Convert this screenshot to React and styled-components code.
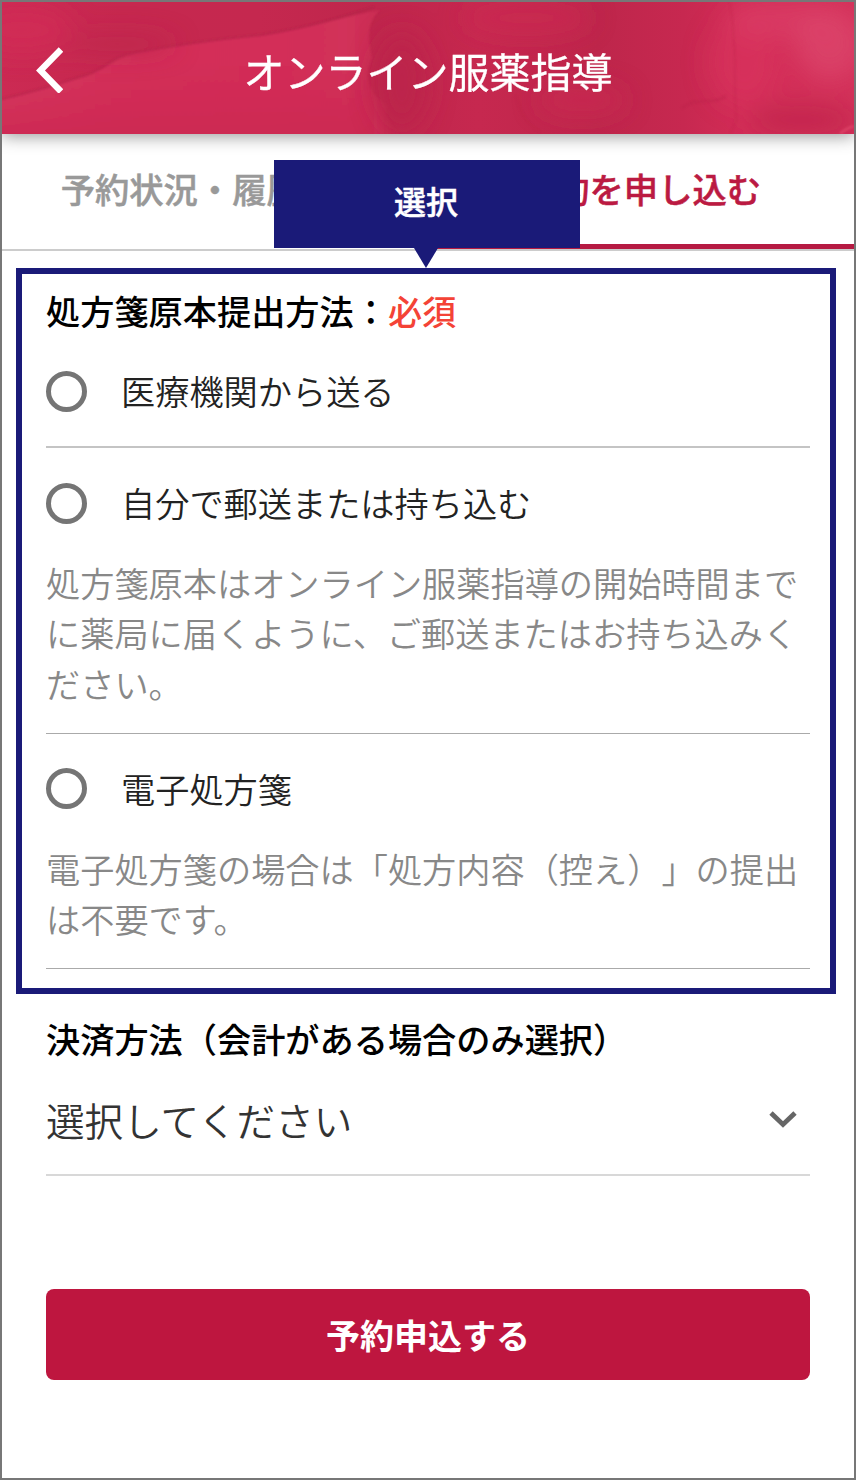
import React, { useState } from "react";

// Styling
import styled, { createGlobalStyle } from "styled-components";

const options = [
  { id: "clinic", label: "医療機関から送る" },
  {
    id: "self",
    label: "自分で郵送または持ち込む",
    note: "処方箋原本はオンライン服薬指導の開始時間までに薬局に届くように、ご郵送またはお持ち込みください。",
  },
  {
    id: "digital",
    label: "電子処方箋",
    note: "電子処方箋の場合は「処方内容（控え）」の提出は不要です。",
  },
];

// Watercolor texture behind the title
const HeaderArt = () => (
  <Art viewBox="0 0 852 132" preserveAspectRatio="none" aria-hidden="true">
    <defs>
      <linearGradient id="base" x1="0" x2="1" y1="0" y2="0">
        <stop offset="0" stopColor="#cc2a53" />
        <stop offset="0.14" stopColor="#c6284f" />
        <stop offset="0.3" stopColor="#c5284f" />
        <stop offset="0.44" stopColor="#bf264c" />
        <stop offset="0.56" stopColor="#c6284f" />
        <stop offset="0.7" stopColor="#be264b" />
        <stop offset="0.8" stopColor="#c72850" />
        <stop offset="0.87" stopColor="#d32d57" />
        <stop offset="1" stopColor="#d33059" />
      </linearGradient>
      <linearGradient id="petal" x1="0" x2="1" y1="0" y2="0">
        <stop offset="0" stopColor="#d83963" />
        <stop offset="0.3" stopColor="#d4305a" />
        <stop offset="0.7" stopColor="#d32d58" />
        <stop offset="0.86" stopColor="#d2315a" />
        <stop offset="0.95" stopColor="#ca2c53" />
        <stop offset="1" stopColor="#c0264c" stopOpacity="0.2" />
      </linearGradient>
      <linearGradient id="fade" x1="0" x2="0" y1="0" y2="1">
        <stop offset="0.4" stopColor="#cd2851" stopOpacity="0" />
        <stop offset="1" stopColor="#cb2850" stopOpacity="0.85" />
      </linearGradient>
      <filter id="soft" x="-50%" y="-80%" width="200%" height="260%">
        <feGaussianBlur stdDeviation="12" />
      </filter>
      <filter id="edge" x="-10%" y="-10%" width="120%" height="120%">
        <feGaussianBlur stdDeviation="1" />
      </filter>
    </defs>
    <rect width="852" height="132" fill="url(#base)" />
    <g filter="url(#edge)">
      <path
        d="M-4 98C22 92 48 85 78 75C106 68 108 55 132 51C180 42 218 37 260 33C310 25 340 15 378 8C364 20 366 38 370 56C360 78 368 92 386 104C380 114 392 124 400 136H-4Z"
        fill="url(#petal)"
      />
      <path
        d="M-4 98C22 92 48 85 78 75C106 68 108 55 132 51C180 42 218 37 260 33C310 25 340 15 372 8V136H-4Z"
        fill="url(#fade)"
      />
      <path
        d="M-4 98C22 92 48 85 78 75C106 68 108 55 132 51C180 42 218 37 260 33C310 25 340 15 372 5"
        fill="none"
        stroke="#ac2045"
        strokeWidth="2"
        opacity="0.5"
      />
    </g>
    <g filter="url(#soft)">
      <ellipse cx="20" cy="28" rx="50" ry="24" fill="#d22c56" opacity="0.8" />
      <ellipse cx="115" cy="42" rx="60" ry="10" fill="#bd264b" opacity="0.6" />
      <ellipse cx="400" cy="80" rx="28" ry="50" fill="#bd254b" opacity="0.9" />
      <ellipse cx="525" cy="16" rx="65" ry="18" fill="#cf2b53" opacity="0.5" />
      <ellipse cx="580" cy="98" rx="45" ry="16" fill="#ca2a51" opacity="0.7" />
      <ellipse cx="742" cy="60" rx="36" ry="45" fill="#d9315d" opacity="0.6" />
      <ellipse cx="780" cy="18" rx="55" ry="18" fill="#dc4068" opacity="0.7" />
      <ellipse cx="828" cy="42" rx="34" ry="36" fill="#dc456b" opacity="0.8" />
      <ellipse cx="800" cy="118" rx="55" ry="18" fill="#c2274d" opacity="0.8" />
    </g>
    <g filter="url(#edge)" fill="none" stroke="#b82449" opacity="0.4">
      <path d="M728 0C732 28 733 48 733 85S738 112 728 132" />
      <path d="M514 94C518 112 526 122 538 130" />
      <path d="M680 106C694 94 710 104 724 94" strokeWidth="2" />
      <path d="M838 132C841 129 846 126 852 124" stroke="#f05a7d" strokeWidth="3" />
    </g>
  </Art>
);

const App = () => {
  const [selected, setSelected] = useState(null);

  return (
    <>
      <GlobalStyle />
      <Screen>
        <Header>
          <HeaderArt />
          <BackButton aria-label="戻る">
            <svg width="30" height="48" viewBox="0 0 30 48">
              <path
                d="M28 4.5L7.5 25.5L28 46.5"
                fill="none"
                stroke="#fff"
                strokeWidth="6.4"
              />
            </svg>
          </BackButton>
          <Title>オンライン服薬指導</Title>
        </Header>
        <Tabs>
          <Tab>予約状況・履歴確認</Tab>
          <Tab $active>予約を申し込む</Tab>
        </Tabs>
        <Highlight>
          <Callout>選択</Callout>
          <Heading>
            処方箋原本提出方法：<Required>必須</Required>
          </Heading>
          {options.map(({ id, label, note }) => (
            <Option key={id} $plain={!note}>
              <OptionRow onClick={() => setSelected(id)}>
                <Radio $checked={selected === id} />
                <OptionLabel>{label}</OptionLabel>
              </OptionRow>
              {note && <Note>{note}</Note>}
            </Option>
          ))}
        </Highlight>
        <Payment>
          <Heading>決済方法（会計がある場合のみ選択）</Heading>
          <Select>
            選択してください
            <svg width="28" height="20" viewBox="0 0 28 20">
              <path
                d="M2 4L14 15.5L26 4"
                fill="none"
                stroke="#666"
                strokeWidth="4.8"
              />
            </svg>
          </Select>
          <Submit>予約申込する</Submit>
        </Payment>
      </Screen>
    </>
  );
};

const GlobalStyle = createGlobalStyle`
  * {
    box-sizing: border-box;
  }
  body {
    margin: 0;
    background: #fff;
    font-family: "Noto Sans CJK JP", sans-serif;
    text-spacing-trim: space-all;
  }
  button {
    border: none;
    padding: 0;
    background: none;
    font-family: inherit;
    cursor: pointer;
  }
`;

const Screen = styled.div`
  width: 856px;
  height: 1480px;
  border: 2px solid #777;
  background: #fff;
  overflow: hidden;
`;

const Header = styled.header`
  position: relative;
  z-index: 1;
  height: 132px;
  display: flex;
  align-items: center;
  justify-content: center;
  box-shadow: 0 2px 16px rgba(0, 0, 0, 0.42);
`;

const Art = styled.svg`
  position: absolute;
  inset: 0;
  width: 100%;
  height: 100%;
`;

const BackButton = styled.button`
  position: absolute;
  left: 31px;
  top: 43px;
  height: 50px;
`;

const Title = styled.h1`
  position: relative;
  margin: 0;
  font-size: 41px;
  font-weight: 400;
  line-height: 60px;
  padding-top: 3px;
  color: #fff;
  -webkit-text-stroke: 0.3px #fff;
`;

const Tabs = styled.nav`
  display: flex;
  height: 117px;
  border-bottom: 2px solid #ccc;
`;

const Tab = styled.button`
  flex: 1;
  height: 115px;
  padding-bottom: ${({ $active }) => ($active ? "2px" : "7px")};
  border-bottom: ${({ $active }) => ($active ? "5px solid #b51a42" : "none")};
  font-size: 34.3px;
  font-weight: 500;
  line-height: 50px;
  color: ${({ $active }) => ($active ? "#bb1a42" : "#999")};
  -webkit-text-stroke: 0.5px;
`;

const Highlight = styled.section`
  position: relative;
  margin: 17px 18px 0 14px;
  height: 726px;
  border: 6px solid #1a1a78;
  padding: 11px 20px 0 24px;
`;

const Callout = styled.div`
  position: absolute;
  z-index: 2;
  left: 252px;
  top: -114px;
  width: 306px;
  height: 88px;
  padding-right: 2px;
  background: #1a1a78;
  font-size: 32px;
  font-weight: 500;
  line-height: 81px;
  text-align: center;
  color: #fff;
  -webkit-text-stroke: 0.5px #fff;
  &::after {
    content: "";
    position: absolute;
    left: 140px;
    top: 88px;
    border: solid transparent;
    border-width: 20px 12px 0;
    border-top-color: #1a1a78;
  }
`;

const Heading = styled.h2`
  margin: 0;
  font-size: 34.2px;
  font-weight: 500;
  line-height: 50px;
  color: #000;
`;

const Required = styled.span`
  color: #f44336;
`;

const Option = styled.div`
  padding: ${({ $plain }) => ($plain ? "31px 0 30px" : "30px 0 25px")};
  border-bottom: ${({ $plain }) => ($plain ? "2px solid #c4c4c4" : "1px solid #aaa")};
`;

const OptionRow = styled.label`
  display: flex;
  align-items: center;
  height: 50px;
`;

const Radio = styled.span`
  width: 41px;
  height: 41px;
  border: 5px solid #757575;
  border-radius: 50%;
  background: ${({ $checked }) => ($checked ? "#bb1a42" : "#fff")};
`;

const OptionLabel = styled.span`
  margin: -2px 0 0 34px;
  font-size: 34.2px;
  font-weight: 350;
  line-height: 50px;
  color: #222;
`;

const Note = styled.p`
  margin: 29px -4px 0 0;
  font-size: 34.2px;
  font-weight: 350;
  line-height: 50.3px;
  color: #888;
`;

const Payment = styled.section`
  padding: 19px 44px 0;
`;

const Select = styled.div`
  display: flex;
  align-items: center;
  justify-content: space-between;
  height: 113px;
  padding-right: 13px;
  border-bottom: 2px solid #d8d8d8;
  font-size: 38.6px;
  font-weight: 350;
  color: #333;
`;

const Submit = styled.button`
  width: 100%;
  height: 91px;
  margin-top: 113px;
  border-radius: 8px;
  background: #be163f;
  font-size: 34px;
  font-weight: 700;
  color: #fff;
`;

export default App;
